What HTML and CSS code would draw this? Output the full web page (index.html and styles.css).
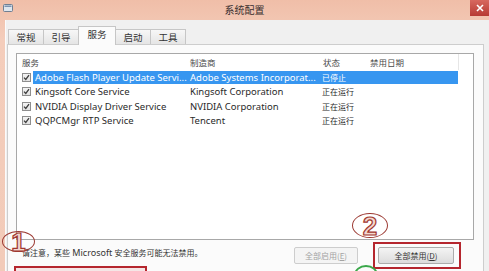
FILE: index.html
```html
<!DOCTYPE html>
<html lang="zh-CN">
<head>
<meta charset="utf-8">
<title>系统配置</title>
<link rel="stylesheet" href="styles.css">
</head>
<body>
<div class="window">
  <div class="titlebar">
    <div class="app-icon">
      <svg width="10" height="8" viewBox="0 0 10 8"><rect x="0.5" y="0.5" width="9" height="7" rx="1" fill="#dfe6ee" stroke="#6f7f92"/><rect x="1.5" y="1.5" width="7" height="1.5" fill="#7d93b0"/></svg>
    </div>
    <div class="title">系统配置</div>
    <div class="close-wrap"><div class="close">
      <svg width="8" height="8" viewBox="0 0 8 8"><path d="M1 1L7 7M7 1L1 7" stroke="#fff" stroke-width="1.6"/></svg>
    </div></div>
  </div>
  <div class="body">
    <div class="tabs">
      <div class="tab">常规</div>
      <div class="tab">引导</div>
      <div class="tab active">服务</div>
      <div class="tab">启动</div>
      <div class="tab">工具</div>
    </div>
    <div class="panel">
      <div class="listbox">
        <div class="header">
          <span class="h-name">服务</span>
          <span class="h-maker">制造商</span>
          <span class="h-status">状态</span>
          <span class="h-date">禁用日期</span>
        </div>
        <div class="row selected">
          <span class="check"><svg width="7" height="7" viewBox="0 0 7 7"><path d="M1 3.6L2.8 5.5L6 1.2" fill="none" stroke="#3d3d3d" stroke-width="1.3"/></svg></span>
          <div class="cells">
            <span class="c-name">Adobe Flash Player Update Servi...</span>
            <span class="c-maker">Adobe Systems Incorporat...</span>
            <span class="c-status zh">已停止</span>
            <span class="c-date"></span>
          </div>
        </div>
        <div class="row">
          <span class="check"><svg width="7" height="7" viewBox="0 0 7 7"><path d="M1 3.6L2.8 5.5L6 1.2" fill="none" stroke="#3d3d3d" stroke-width="1.3"/></svg></span>
          <div class="cells">
            <span class="c-name">Kingsoft Core Service</span>
            <span class="c-maker">Kingsoft Corporation</span>
            <span class="c-status zh">正在运行</span>
            <span class="c-date"></span>
          </div>
        </div>
        <div class="row">
          <span class="check"><svg width="7" height="7" viewBox="0 0 7 7"><path d="M1 3.6L2.8 5.5L6 1.2" fill="none" stroke="#3d3d3d" stroke-width="1.3"/></svg></span>
          <div class="cells">
            <span class="c-name">NVIDIA Display Driver Service</span>
            <span class="c-maker">NVIDIA Corporation</span>
            <span class="c-status zh">正在运行</span>
            <span class="c-date"></span>
          </div>
        </div>
        <div class="row">
          <span class="check"><svg width="7" height="7" viewBox="0 0 7 7"><path d="M1 3.6L2.8 5.5L6 1.2" fill="none" stroke="#3d3d3d" stroke-width="1.3"/></svg></span>
          <div class="cells">
            <span class="c-name">QQPCMgr RTP Service</span>
            <span class="c-maker">Tencent</span>
            <span class="c-status zh">正在运行</span>
            <span class="c-date"></span>
          </div>
        </div>
      </div>
      <div class="footer">
        <div class="footer-left">
          <div class="note"><span class="zh">请注意，某些</span> Microsoft <span class="zh">安全服务可能无法禁用。</span></div>
          <div class="mark-hide"></div>
        </div>
        <div class="footer-right">
          <button class="btn" disabled>全部启用(<u>E</u>)</button>
          <div class="mark-btn"><button class="btn btn-main">全部禁用(<u>D</u>)</button></div>
        </div>
      </div>
    </div>
  </div>
  <div class="anno anno-1"><span>1</span></div>
  <div class="anno anno-2"><span>2</span></div>
  <div class="anno anno-green"></div>
</div>
</body>
</html>
```
FILE: styles.css
```css
* { box-sizing: border-box; margin: 0; padding: 0; }
html, body { width: 489px; height: 271px; overflow: hidden; }
body {
  font-family: "Noto Sans", "Noto Sans CJK SC", sans-serif;
  font-size: 9.5px;
  color: #2a2a2a;
  background: #f3c9b5;
}
.zh { font-family: "Noto Sans CJK SC", sans-serif; font-size: 8px; }

.window {
  position: relative;
  width: 489px;
  height: 271px;
  overflow: hidden;
  background: linear-gradient(180deg, #f0bea8 0%, #f4cdbb 40px, #f2cbb9 100%);
}

.titlebar {
  height: 20px;
  display: grid;
  grid-template-columns: 1fr auto 1fr;
  align-items: start;
}
.app-icon { padding: 4px 0 0 3px; line-height: 0; }
.title {
  font-family: "Noto Sans CJK SC", sans-serif;
  font-size: 10px;
  line-height: 20px;
  color: #3a3030;
}
.close-wrap { display: flex; justify-content: flex-end; }
.close {
  width: 19px;
  height: 16px;
  background: linear-gradient(180deg, #d7685f, #b73a33);
  display: flex;
  align-items: center;
  justify-content: center;
}

.body {
  margin-left: 5px;
  height: 251px;
  overflow: hidden;
  background: #f0f0f0;
  border-left: 1px solid #fbfbfb;
  padding-top: 6px;
}

.tabs {
  display: flex;
  align-items: flex-end;
  padding-left: 2px;
  height: 19px;
  margin-bottom: -1px;
  position: relative;
  z-index: 1;
}
.tab {
  width: 36px;
  height: 15px;
  margin-left: -1px;
  margin-bottom: 1px;
  border: 1px solid #c6c6c6;
  border-bottom: none;
  background: linear-gradient(180deg, #f7f7f7, #e5e5e5);
  font-family: "Noto Sans CJK SC", sans-serif;
  font-size: 9.5px;
  line-height: 14px;
  text-align: center;
  color: #333;
}
.tab:first-child { margin-left: 0; }
.tab.active {
  width: 38px;
  height: 19px;
  margin-bottom: 0;
  background: #fbfbfb;
  line-height: 15px;
}

.panel {
  margin-left: 1px;
  width: 477px;
  height: 227px;
  overflow: hidden;
  border: 1px solid #cdcdcd;
  border-bottom: none;
  background: #fbfbfb;
  padding: 8px 0 0 8px;
}

.listbox {
  width: 458px;
  height: 187px;
  border: 1px solid #a8a8a8;
  background: #fff;
}
.header {
  height: 16px;
  display: flex;
  align-items: center;
  padding-left: 5px;
  font-family: "Noto Sans CJK SC", sans-serif;
  font-size: 8.5px;
  color: #4a4a4a;
}
.h-name { width: 168px; }
.h-maker { width: 133px; }
.h-status { width: 47px; }
.h-date { width: 89px; height: 16px; line-height: 16px; border-right: 1px solid #e6e6e6; }

.row {
  height: 14.5px;
  display: flex;
  align-items: center;
  padding-left: 5px;
}
.check {
  width: 9px;
  height: 9px;
  border: 1px solid #8e8e8e;
  background: linear-gradient(180deg, #f4f4f4, #e2e2e2);
  margin-right: 2px;
  display: flex;
  align-items: center;
  justify-content: center;
}
.cells {
  width: 425px;
  height: 13px;
  display: flex;
  align-items: center;
  white-space: nowrap;
}
.cells span { padding-left: 2px; overflow: hidden; }
.c-name { width: 155px; }
.c-maker { width: 132px; }
.c-status { width: 48px; }
.c-date { flex: 1; }
.row.selected .cells { background: #3796f0; color: #fff; }

.footer { display: flex; }
.footer-left { padding: 6px 0 0 6px; }
.note { line-height: 14px; white-space: nowrap; font-size: 9px; color: #333; }
.mark-hide {
  margin: 6px 0 0 -8px;
  width: 133px;
  height: 20px;
  border: 2px solid #b5262e;
  background: #f5e6e6;
}
.footer-right {
  margin-left: auto;
  padding: 2px 22px 0 0;
  display: flex;
  align-items: center;
  height: 29px;
}
.btn {
  height: 17px;
  border: 1px solid #acacac;
  border-radius: 2px;
  background: linear-gradient(180deg, #f4f4f4, #dcdcdc);
  font-family: "Noto Sans CJK SC", sans-serif;
  font-size: 8px;
  color: #333;
}
.btn[disabled] {
  width: 64px;
  margin-right: 15px;
  color: #a3a3a3;
  border-color: #cdcdcd;
  background: #f4f4f4;
}
.btn-main { width: 76px; }
.mark-btn {
  width: 88px;
  height: 27px;
  border: 2px solid #b5262e;
  padding: 3px 5px 3px 3px;
}

.anno {
  position: absolute;
  border-radius: 50%;
  display: flex;
  align-items: center;
  justify-content: center;
}
.anno span {
  font-family: "Liberation Sans", sans-serif;
  font-weight: bold;
  font-size: 26px;
  line-height: 1;
  color: #f3d8d0;
  -webkit-text-stroke: 1.2px #a2372f;
}
.anno-1 { left: 2px; top: 231px; width: 33px; height: 21px; border: 1.5px solid #9c3a33; }
.anno-2 { left: 352px; top: 213px; width: 36px; height: 25px; border: 1.5px solid #9c3a33; }
.anno-green { left: 354px; top: 265px; width: 24px; height: 20px; border: 2.5px solid #3aa84a; }
```
